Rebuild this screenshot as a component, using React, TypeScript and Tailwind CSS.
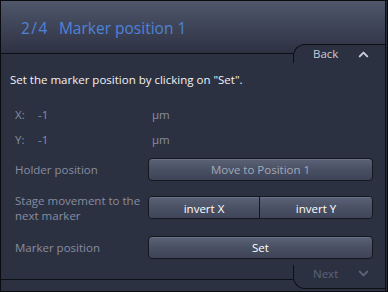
import React from "react";
import { ChevronUp, ChevronDown } from "lucide-react";

const btn =
  "h-[23px] flex items-center justify-center bg-gradient-to-b from-[#5b6277] via-[#4a5064] to-[#3e4456] shadow-[inset_0_1px_0_rgba(255,255,255,0.10)] text-[11.5px]";

export default function App() {
  return (
    <div className="w-[388px] h-[292px] border border-[#0a0b0f] bg-[#262a37] flex font-['Open_Sans',sans-serif] text-[11.5px] overflow-hidden">
      <div className="flex-1 flex flex-col border-r border-[#0e1016] mr-[1px]">
        {/* Header */}
        <div className="h-[53px] shrink-0 bg-gradient-to-b from-[#50576b] to-[#2d3243] border-b border-[#0e1016] flex items-start pl-[20px] pt-[16px] text-[15.5px] text-[#4f82d8]">
          <span className="tracking-[1.5px]">2/4</span>
          <span className="ml-[10px]">Marker position 1</span>
        </div>

        <div className="flex-1 bg-[#2c3142] flex flex-col">
          {/* Back tab */}
          <div className="flex justify-end -mt-[10px] h-[19px]">
            <div className="w-[92px] h-[19px] bg-[#2c3142] border-t border-l border-[#0e1016] rounded-tl-[12px] flex items-center pl-[19px] text-[#c9cdd8]">
              <span>Back</span>
              <ChevronUp className="w-[15px] h-[15px] ml-[18px]" strokeWidth={3.2} />
            </div>
          </div>

          <div className="mt-[9px] h-[16px] leading-[16px] pl-[9px] text-[#f2f2f2]">
            Set the marker position by clicking on "Set".
          </div>

          <div className="mt-[19px] h-[16px] leading-[16px] pl-[14px] flex text-[#878d9f]">
            <span className="w-[23px]">X:</span>
            <span className="w-[114px]">-1</span>
            <span>µm</span>
          </div>
          <div className="mt-[9px] h-[16px] leading-[16px] pl-[14px] flex text-[#878d9f]">
            <span className="w-[23px]">Y:</span>
            <span className="w-[114px]">-1</span>
            <span>µm</span>
          </div>

          {/* Holder position */}
          <div className="mt-[10px] pl-[14px] flex items-center">
            <span className="w-[133px] text-[#878d9f]">Holder position</span>
            <div className={`${btn} w-[225px] rounded-[4px] border border-[#15171e] text-[#a3a9b8]`}>
              Move to Position 1
            </div>
          </div>

          {/* Stage movement */}
          <div className="mt-[15px] h-[23px] pl-[14px] flex items-center">
            <span className="w-[133px] text-[#878d9f] leading-[15px]">
              Stage movement to the
              <br />
              next marker
            </span>
            <div className="w-[225px] h-[23px] flex rounded-[4px] border border-[#15171e] overflow-hidden">
              <div className={`${btn} h-[21px] w-[111px] border-r border-[#15171e] text-white`}>invert X</div>
              <div className={`${btn} h-[21px] flex-1 text-white`}>invert Y</div>
            </div>
          </div>

          {/* Marker position */}
          <div className="mt-[17px] pl-[14px] flex items-center">
            <span className="w-[133px] text-[#878d9f]">Marker position</span>
            <div className={`${btn} w-[225px] rounded-[4px] border border-[#15171e] text-white`}>Set</div>
          </div>

          {/* Next tab */}
          <div className="mt-[6px] flex">
            <div className="flex-1 h-[15px] border-b border-[#0e1016]" />
            <div className="w-[92px] h-[24px] border-b border-l border-[#0e1016] rounded-bl-[12px] flex items-start pl-[19px] pt-px text-[#5d6479]">
              <span className="leading-[16px]">Next</span>
              <ChevronDown className="w-[15px] h-[15px] ml-[18px]" strokeWidth={3.2} />
            </div>
          </div>
        </div>
      </div>
    </div>
  );
}
